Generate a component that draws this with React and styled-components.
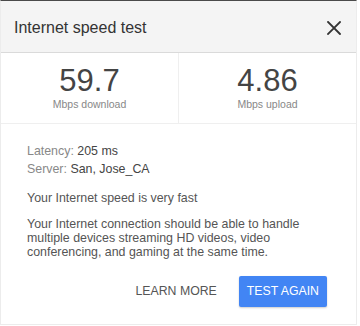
import styled, { createGlobalStyle } from 'styled-components';

const GlobalStyle = createGlobalStyle`
	html, body {
		margin: 0;
		padding: 0;
		background: #fff;
	}
	body {
		font-family: 'Liberation Sans', Arial, sans-serif;
	}
`;

const Card = styled.div`
	box-sizing: border-box;
	width: 357px;
	height: 325px;
	border-top: 1px solid #4a4a4a;
	border-left: 1px solid #ececec;
	border-right: 1px solid #ececec;
	border-bottom: 1px solid #ececec;
	background: #fff;
	display: flex;
	flex-direction: column;
`;

const Header = styled.header`
	height: 51px;
	background: #f4f4f4;
	border-bottom: 1px solid #dadada;
	display: flex;
	align-items: center;
	justify-content: space-between;
	padding: 0 14px 0 13px;
`;

const Title = styled.h1`
	margin: 0;
	font-size: 16px;
	font-weight: 400;
	color: #333;
	position: relative;
	top: 1px;
`;

const CloseButton = styled.button`
	border: 0;
	background: none;
	padding: 0;
	width: 16px;
	height: 16px;
	display: flex;
	align-items: center;
	justify-content: center;
	cursor: pointer;
	position: relative;
	top: 1px;
`;

const Stats = styled.section`
	display: grid;
	grid-template-columns: 178px 1fr;
	height: 70px;
	border-bottom: 1px solid #efefef;
`;

const Stat = styled.div`
	display: flex;
	flex-direction: column;
	align-items: center;
	padding-top: 12px;
	${(props) => props.$divided && 'border-right: 1px solid #efefef;'}
`;

const Value = styled.span`
	font-size: 31px;
	line-height: 32px;
	color: #444;
`;

const Unit = styled.span`
	font-size: 10.5px;
	line-height: 12px;
	margin-top: 1px;
	color: #888;
`;

const Body = styled.section`
	padding: 18px 29px 0 26px;
	font-size: 12.4px;
	color: #555;
	display: flex;
	flex-direction: column;
`;

const Meta = styled.div`
	line-height: 18px;
	color: #888;
	& b {
		font-weight: 400;
		color: #444;
	}
`;

const Verdict = styled.p`
	margin: 13px 0 0;
	line-height: 14px;
`;

const Description = styled.p`
	margin: 13px 0 0;
	line-height: 13.9px;
`;

const Actions = styled.div`
	display: flex;
	justify-content: flex-end;
	gap: 14px;
	margin-top: 16px;
`;

const Button = styled.button`
	font-family: inherit;
	font-size: 12.3px;
	height: 31px;
	padding: 0 8px;
	border: 0;
	border-radius: 2px;
	text-transform: uppercase;
	cursor: pointer;
	background: ${(props) => (props.$primary ? '#4285f4' : 'transparent')};
	color: ${(props) => (props.$primary ? '#fff' : '#555')};
	box-shadow: ${(props) => (props.$primary ? '0 1px 2px rgba(0,0,0,0.2)' : 'none')};
`;

function CloseIcon() {
	return (
		<svg width="14" height="14" viewBox="0 0 14 14">
			<path d="M1 1 L13 13 M13 1 L1 13" stroke="#333" strokeWidth="1.8" strokeLinecap="square" />
		</svg>
	);
}

export default function App() {
	return (
		<>
			<GlobalStyle />
			<Card>
				<Header>
					<Title>Internet speed test</Title>
					<CloseButton aria-label="Close">
						<CloseIcon />
					</CloseButton>
				</Header>
				<Stats>
					<Stat $divided>
						<Value>59.7</Value>
						<Unit>Mbps download</Unit>
					</Stat>
					<Stat>
						<Value>4.86</Value>
						<Unit>Mbps upload</Unit>
					</Stat>
				</Stats>
				<Body>
					<Meta>
						Latency: <b>205 ms</b>
					</Meta>
					<Meta>
						Server: <b>San, Jose_CA</b>
					</Meta>
					<Verdict>Your Internet speed is very fast</Verdict>
					<Description>
						Your Internet connection should be able to handle multiple devices streaming HD videos, video
						conferencing, and gaming at the same time.
					</Description>
					<Actions>
						<Button>Learn more</Button>
						<Button $primary>Test again</Button>
					</Actions>
				</Body>
			</Card>
		</>
	);
}
